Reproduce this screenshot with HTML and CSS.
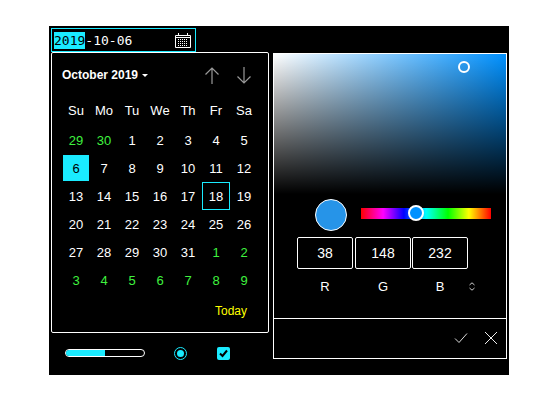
FILE: index.html
```html
<!DOCTYPE html>
<html lang="en">
<head>
  <meta charset="UTF-8" />
  <meta name="viewport" content="width=device-width, initial-scale=1" />
  <title>Date and colour pickers</title>
  <link rel="stylesheet" href="styles.css">
</head>
<body>

  <div class="stage">
    <div class="date-field">
      <div class="date-value">
        <span class="seg seg-active">2019</span><span class="sep">-</span><span class="seg">10</span><span class="sep">-</span><span class="seg">06</span>
      </div>
      <svg class="cal-icon" width="16" height="15" viewBox="0 0 16 15" fill="none" stroke="#fff" stroke-width="1">
        <path d="M.5 2.5h15v12H.5z" />
        <path d="M.5 4.5h15" />
        <path d="M3.5 0v3M12.5 0v3" />
        <path d="M3 6.5h10M3 8.5h10M3 10.5h10M3 12.5h10" stroke-dasharray="1 1" />
      </svg>
    </div>

    <div class="main">
      <div class="left">
        <div class="calendar">
          <div class="cal-head">
            <div class="month">October 2019 <span class="caret"></span></div>
            <div class="cal-nav">
              <svg width="14" height="17" viewBox="0 0 14 17" fill="none" stroke="#999" stroke-width="1.2">
                <path d="M7 1v16M.5 7.5L7 1l6.500 6.500" />
              </svg>
              <svg width="14" height="17" viewBox="0 0 14 17" fill="none" stroke="#999" stroke-width="1.2">
                <path d="M7 0v16M.5 9.500L7 16l6.500-6.500" />
              </svg>
            </div>
          </div>

          <div class="days">
            <div class="dow">Su</div><div class="dow">Mo</div><div class="dow">Tu</div><div class="dow">We</div><div class="dow">Th</div><div class="dow">Fr</div><div class="dow">Sa</div>

            <div class="day other">29</div><div class="day other">30</div><div class="day">1</div><div class="day">2</div><div class="day">3</div><div class="day">4</div><div class="day">5</div>
            <div class="day selected">6</div><div class="day">7</div><div class="day">8</div><div class="day">9</div><div class="day">10</div><div class="day">11</div><div class="day">12</div>
            <div class="day">13</div><div class="day">14</div><div class="day">15</div><div class="day">16</div><div class="day">17</div><div class="day today">18</div><div class="day">19</div>
            <div class="day">20</div><div class="day">21</div><div class="day">22</div><div class="day">23</div><div class="day">24</div><div class="day">25</div><div class="day">26</div>
            <div class="day">27</div><div class="day">28</div><div class="day">29</div><div class="day">30</div><div class="day">31</div><div class="day other">1</div><div class="day other">2</div>
            <div class="day other">3</div><div class="day other">4</div><div class="day other">5</div><div class="day other">6</div><div class="day other">7</div><div class="day other">8</div><div class="day other">9</div>
          </div>

          <div class="today-link">Today</div>
        </div>

        <div class="controls">
          <div class="progress"><div class="progress-fill"></div></div>
          <div class="radio"></div>
          <div class="checkbox">
            <svg width="13" height="13" viewBox="0 0 13 13" fill="none" stroke="#000" stroke-width="2">
              <path d="M3 6.500l2.500 2.500 4.500-5.500" />
            </svg>
          </div>
        </div>
      </div>

      <div class="picker">
        <div class="picker-body">
          <div class="sat-area">
            <div class="sat-thumb"></div>
          </div>

          <div class="hue-row">
            <div class="swatch"></div>
            <div class="hue-bar">
              <div class="hue-thumb"></div>
            </div>
          </div>

          <div class="rgb-inputs">
            <div class="rgb-box">38</div>
            <div class="rgb-box">148</div>
            <div class="rgb-box">232</div>
          </div>

          <div class="rgb-labels">
            <div class="rgb-label">R</div>
            <div class="rgb-label">G</div>
            <div class="rgb-label">B</div>
            <svg class="unfold" width="6" height="9" viewBox="0 0 6 9" fill="none" stroke="#ccc" stroke-width="1">
              <path d="M.5 3L3 .8 5.500 3M.5 6L3 8.200 5.500 6" />
            </svg>
          </div>
        </div>

        <div class="picker-foot">
          <svg width="14" height="12" viewBox="0 0 14 12" fill="none" stroke="#ddd" stroke-width="1">
            <path d="M1 6.500l4 4L13 1.500" />
          </svg>
          <svg width="14" height="14" viewBox="0 0 14 14" fill="none" stroke="#eee" stroke-width="1">
            <path d="M1 1l12 12M13 1L1 13" />
          </svg>
        </div>
      </div>
    </div>
  </div>

</body>
</html>
```

FILE: styles.css
```css
body {
  margin: 26px 0 0 49px;
  background: #fff;
  font-family: "Liberation Sans", Arial, sans-serif;
  color: #fff;
}

.stage {
  width: 460px;
  height: 349px;
  box-sizing: border-box;
  padding: 2px;
  background: #000;
}

/* date input */
.date-field {
  width: 145px;
  height: 24px;
  box-sizing: border-box;
  border: 1px solid #1aebff;
  display: flex;
  align-items: center;
  justify-content: space-between;
  padding: 0 4px 0 2px;
}

.date-value {
  display: flex;
  align-items: center;
  font-family: "DejaVu Sans Mono", monospace;
  font-size: 13px;
  line-height: 17px;
}

.seg-active {
  background: #1aebff;
  color: #000;
}

.main {
  display: flex;
  gap: 4px;
}

/* calendar */
.left {
  width: 218px;
}

.calendar {
  height: 281px;
  box-sizing: border-box;
  border: 1px solid #fff;
  border-radius: 2px;
  padding: 0 10px;
}

.cal-head {
  height: 44px;
  display: flex;
  align-items: center;
  justify-content: space-between;
  padding-right: 7px;
}

.month {
  margin-top: -1px;
  font-size: 12px;
  font-weight: bold;
}

.caret {
  display: inline-block;
  margin-left: 1px;
  vertical-align: 2px;
  border: 3.5px solid transparent;
  border-top-color: #fff;
  border-bottom: 0;
}

.cal-nav {
  display: flex;
  gap: 18px;
}

.days {
  display: grid;
  grid-template-columns: repeat(7, 28px);
  grid-auto-rows: 28px;
  margin-top: 1px;
  font-size: 13px;
  text-align: center;
}

.dow, .day {
  display: flex;
  align-items: center;
  justify-content: center;
}

.dow {
  height: 24px;
}

.other {
  color: #3ff23f;
}

.selected {
  background: #1aebff;
  color: #000;
  margin: 1px;
}

.today {
  border: 1px solid #1aebff;
}

.today-link {
  margin-top: 10px;
  text-align: right;
  padding-right: 11px;
  color: #ffff00;
  font-size: 12px;
}

/* progress, radio, checkbox */
.controls {
  display: flex;
  align-items: center;
  height: 40px;
  padding-left: 14px;
}

.progress {
  width: 80px;
  height: 8px;
  box-sizing: border-box;
  border: 1px solid #fff;
  border-radius: 4px;
  overflow: hidden;
}

.progress-fill {
  width: 50%;
  height: 100%;
  background: #1aebff;
}

.radio {
  width: 13px;
  height: 13px;
  box-sizing: border-box;
  border: 1px solid #1aebff;
  border-radius: 50%;
  margin-left: 29px;
  padding: 2px;
  background: #1aebff content-box;
}

.checkbox {
  width: 13px;
  height: 13px;
  background: #1aebff;
  border-radius: 2px;
  margin-left: 30px;
}

.checkbox svg {
  display: block;
}

/* colour picker */
.picker {
  width: 234px;
  height: 306px;
  box-sizing: border-box;
  margin-top: 1px;
  border: 1px solid #fff;
}

.picker-body {
  height: 264px;
}

.sat-area {
  position: relative;
  height: 140px;
  background:
    linear-gradient(to bottom, rgba(0, 0, 0, 0), #000),
    linear-gradient(to right, #fff, #0091ff);
}

.sat-thumb {
  position: absolute;
  left: 184px;
  top: 7px;
  width: 12px;
  height: 12px;
  box-sizing: border-box;
  border: 2px solid #fff;
  border-radius: 50%;
}

.hue-row {
  display: flex;
  align-items: center;
  padding: 5px 0 0 41px;
  gap: 14px;
}

.swatch {
  width: 32px;
  height: 32px;
  box-sizing: border-box;
  border: 1px solid #fff;
  border-radius: 50%;
  background: #2694e8;
}

.hue-bar {
  position: relative;
  width: 130px;
  height: 11px;
  margin-top: -3px;
  background: linear-gradient(to right, #f00, #f0f 17%, #00f 33%, #0ff 50%, #0f0 67%, #ff0 83%, #f00);
}

.hue-thumb {
  position: absolute;
  left: 47px;
  top: -3px;
  width: 16px;
  height: 16px;
  box-sizing: border-box;
  border: 2px solid #fff;
  border-radius: 50%;
  background: #0091ff;
}

.rgb-inputs {
  display: flex;
  gap: 2px;
  margin: 6px 0 0 23px;
}

.rgb-box {
  width: 56px;
  height: 32px;
  box-sizing: border-box;
  border: 1px solid #fff;
  border-radius: 2px;
  display: flex;
  align-items: center;
  justify-content: center;
  font-size: 14px;
}

.rgb-box:last-child {
  margin-left: -1px;
}

.rgb-labels {
  display: flex;
  align-items: center;
  gap: 2px;
  margin: 9px 0 0 23px;
  height: 16px;
  font-size: 13px;
}

.rgb-label {
  width: 56px;
  text-align: center;
}

.rgb-label:nth-child(3) {
  margin-left: -1px;
}

.unfold {
  margin-left: -1px;
}

.picker-foot {
  height: 40px;
  box-sizing: border-box;
  border-top: 1px solid #fff;
  display: flex;
  align-items: center;
  justify-content: flex-end;
  gap: 16px;
  padding: 0 8px 2px 0;
}
```
